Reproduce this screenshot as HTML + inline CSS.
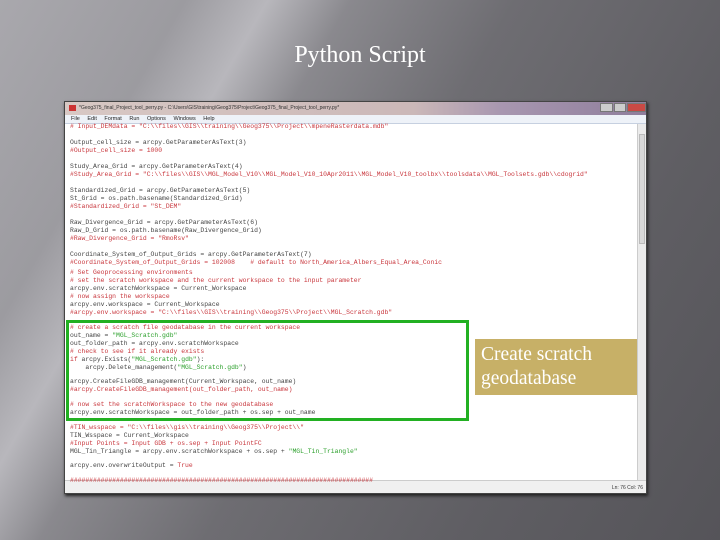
<!DOCTYPE html>
<html><head><style>
*{margin:0;padding:0;box-sizing:border-box}
body{width:720px;height:540px;overflow:hidden;position:relative;
background:linear-gradient(120deg,#a9a8ad 0%,#9c9ba0 18%,#b8b7bc 26%,#8a898e 34%,#6e6d72 50%,#5f5e63 75%,#555459 100%);}
.title{position:absolute;top:42px;left:0;width:720px;text-align:center;color:#fff;font:24px "Liberation Serif",serif}
.win{position:absolute;left:64px;top:101px;width:583px;height:393px;background:#fff;border:1px solid #444;box-shadow:1px 2px 3px #222}
.tb{position:absolute;left:0;top:0;width:100%;height:13px;background:linear-gradient(90deg,#d8c8c4,#cbb8b8 60%,#a897b0 75%,#8f7e9c);font:5px "Liberation Sans",sans-serif;color:#333;padding:3px 0 0 14px;white-space:nowrap}
.tb i{position:absolute;left:4px;top:3px;width:7px;height:6px;background:#c33}
.btn{position:absolute;top:1px;height:9px;border:1px solid #777;background:#ccc}
.menu{position:absolute;left:0;top:13px;width:100%;height:9px;background:#eef2f8;border-bottom:1px solid #c6d0e0;font:5.5px "Liberation Sans",sans-serif;color:#222;padding:1px 0 0 6px;word-spacing:6px;white-space:nowrap}
.sb{position:absolute;right:0;top:22px;width:9px;bottom:13px;background:#ebebeb;border-left:1px solid #ccc}
.st{position:absolute;left:0;bottom:0;width:100%;height:13px;background:#f0f0f0;border-top:1px solid #ccc;font:5px "Liberation Sans",sans-serif;color:#333;text-align:right;padding:4px 3px 0 0}
.c{position:absolute;left:6px;font:6.4px/7px "Liberation Mono",monospace;white-space:pre;color:#444}
.r{color:#c8363c}.g{color:#2ca02c}
.box{position:absolute;left:66px;top:320px;width:403px;height:101px;border:3px solid #22b022}
.note{position:absolute;left:475px;top:339px;width:162px;height:56px;background:#c7b067;color:#fff;font:19.5px/24px "Liberation Serif",serif;padding:4px 0 0 6px;white-space:nowrap}
</style></head><body>
<div class="title">Python Script</div>
<div class="win">
<div class="tb"><i></i>*Geog375_final_Project_tool_perry.py - C:\Users\GIS\training\Geog375\Project\Geog375_final_Project_tool_perry.py*
<div class="btn" style="left:535px;width:13px"></div><div class="btn" style="left:549px;width:12px"></div><div class="btn" style="left:562px;width:19px;background:#c94a45"></div></div>
<div class="menu">File Edit Format Run Options Windows Help</div>
<div class="sb"><div style="position:absolute;left:1px;top:10px;width:6px;height:110px;background:#d8d8d8;border:1px solid #bbb"></div></div>
<div class="st">Ln: 76 Col: 76</div>
</div>
<div class="c r" style="top:123px;left:70px"># Input_DEMdata = "C:\\files\\GIS\\training\\Geog375\\Project\\mpeneRasterdata.mdb"</div>
<div class="c" style="top:139px;left:70px">Output_cell_size = arcpy.GetParameterAsText(3)</div>
<div class="c r" style="top:147px;left:70px">#Output_cell_size = 1000</div>
<div class="c" style="top:163px;left:70px">Study_Area_Grid = arcpy.GetParameterAsText(4)</div>
<div class="c r" style="top:171px;left:70px">#Study_Area_Grid = "C:\\files\\GIS\\MGL_Model_V10\\MGL_Model_V10_10Apr2011\\MGL_Model_V10_toolbx\\toolsdata\\MGL_Toolsets.gdb\\cdogrid"</div>
<div class="c" style="top:187px;left:70px">Standardized_Grid = arcpy.GetParameterAsText(5)</div>
<div class="c" style="top:195px;left:70px">St_Grid = os.path.basename(Standardized_Grid)</div>
<div class="c r" style="top:203px;left:70px">#Standardized_Grid = "St_DEM"</div>
<div class="c" style="top:219px;left:70px">Raw_Divergence_Grid = arcpy.GetParameterAsText(6)</div>
<div class="c" style="top:227px;left:70px">Raw_D_Grid = os.path.basename(Raw_Divergence_Grid)</div>
<div class="c r" style="top:235px;left:70px">#Raw_Divergence_Grid = "RmoRsv"</div>
<div class="c" style="top:251px;left:70px">Coordinate_System_of_Output_Grids = arcpy.GetParameterAsText(7)</div>
<div class="c r" style="top:259px;left:70px">#Coordinate_System_of_Output_Grids = 102008    # default to North_America_Albers_Equal_Area_Conic</div>
<div class="c r" style="top:269px;left:70px"># Set Geoprocessing environments</div>
<div class="c r" style="top:277px;left:70px"># set the scratch workspace and the current workspace to the input parameter</div>
<div class="c" style="top:285px;left:70px">arcpy.env.scratchWorkspace = Current_Workspace</div>
<div class="c r" style="top:293px;left:70px"># now assign the workspace</div>
<div class="c" style="top:301px;left:70px">arcpy.env.workspace = Current_Workspace</div>
<div class="c r" style="top:309px;left:70px">#arcpy.env.workspace = "C:\\files\\GIS\\training\\Geog375\\Project\\MGL_Scratch.gdb"</div>
<div class="c r" style="top:324px;left:70px"># create a scratch file geodatabase in the current workspace</div>
<div class="c" style="top:332px;left:70px">out_name = <span class="g">"MGL_Scratch.gdb"</span></div>
<div class="c" style="top:340px;left:70px">out_folder_path = arcpy.env.scratchWorkspace</div>
<div class="c r" style="top:348px;left:70px"># check to see if it already exists</div>
<div class="c" style="top:356px;left:70px"><span class="r">if</span> arcpy.Exists(<span class="g">"MGL_Scratch.gdb"</span>):</div>
<div class="c" style="top:364px;left:70px">    arcpy.Delete_management(<span class="g">"MGL_Scratch.gdb"</span>)</div>
<div class="c" style="top:378px;left:70px">arcpy.CreateFileGDB_management(Current_Workspace, out_name)</div>
<div class="c r" style="top:386px;left:70px">#arcpy.CreateFileGDB_management(out_folder_path, out_name)</div>
<div class="c r" style="top:401px;left:70px"># now set the scratchWorkspace to the new geodatabase</div>
<div class="c" style="top:409px;left:70px">arcpy.env.scratchWorkspace = out_folder_path + os.sep + out_name</div>
<div class="c r" style="top:424px;left:70px">#TIN_wsspace = "C:\\files\\gis\\training\\Geog375\\Project\\"</div>
<div class="c" style="top:432px;left:70px">TIN_Wsspace = Current_Workspace</div>
<div class="c r" style="top:440px;left:70px">#Input Points = Input GDB + os.sep + Input PointFC</div>
<div class="c" style="top:448px;left:70px">MGL_Tin_Triangle = arcpy.env.scratchWorkspace + os.sep + <span class="g">"MGL_Tin_Triangle"</span></div>
<div class="c" style="top:462px;left:70px">arcpy.env.overwriteOutput = <span class="r">True</span></div>
<div class="c r" style="top:477px;left:70px">###############################################################################</div>
<div class="box"></div>
<div class="note">Create scratch<br>geodatabase</div>
</body></html>
